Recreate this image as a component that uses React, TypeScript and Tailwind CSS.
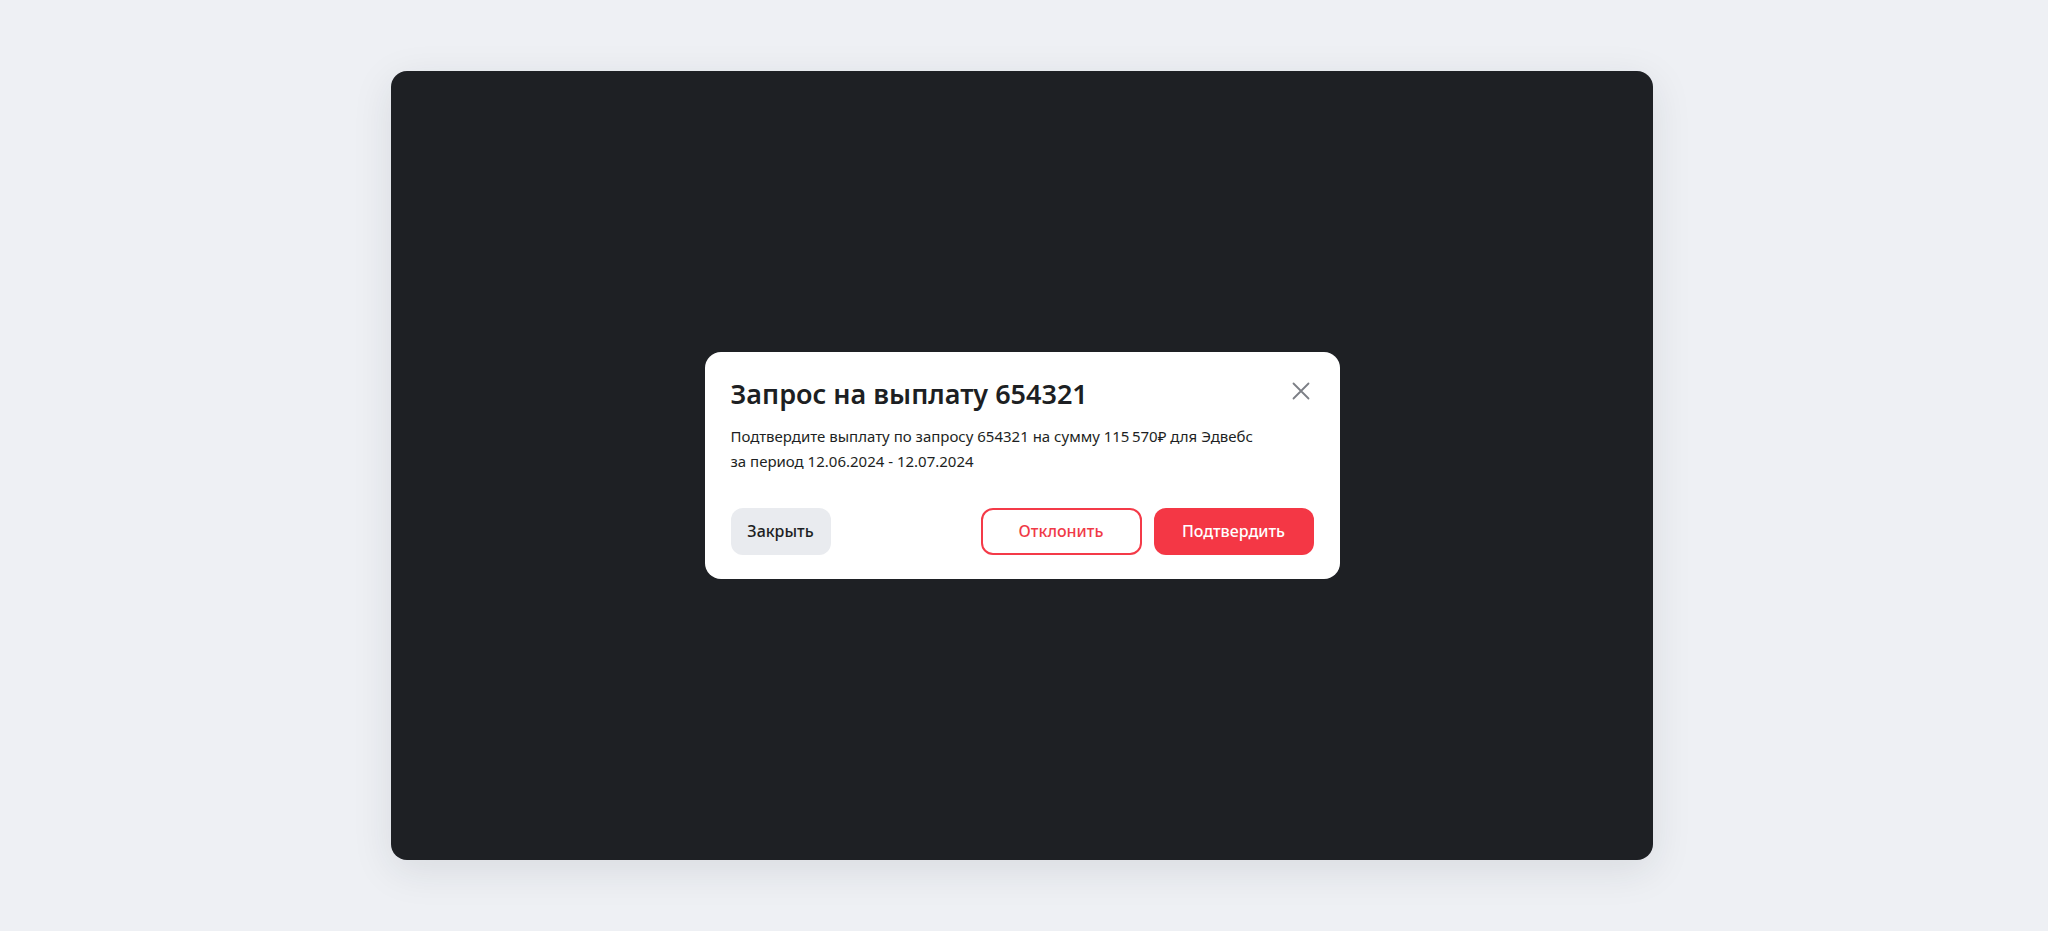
import React from "react";

export default function App() {
  return (
    <div
      className="w-full h-[931px] bg-[#eef0f4] flex items-center justify-center pr-[4px] pb-[1px]"
      style={{ fontFamily: '"Noto Sans", "Open Sans", sans-serif' }}
    >
      <div className="w-[1262px] h-[789px] rounded-2xl bg-[#1e2024] shadow-[0_10px_40px_rgba(30,35,50,0.10)] flex items-center justify-center">
        <div className="w-[635px] bg-white rounded-2xl px-[26px] pt-6 pb-6 flex flex-col">
          <div className="flex items-start justify-between">
            <h2 className="text-[27px] leading-[36px] font-semibold text-[#1d1f23]">
              Запрос на выплату 654321
            </h2>
            <button className="mt-[6px] mr-[4px] w-[18px] h-[18px] flex items-center justify-center text-[#7c7f86]">
              <svg width="18" height="18" viewBox="0 0 18 18" fill="none">
                <path d="M1.5 1.5L16.5 16.5M16.5 1.5L1.5 16.5" stroke="currentColor" strokeWidth="1.8" strokeLinecap="round" />
              </svg>
            </button>
          </div>
          <p className="mt-3 text-[15px] leading-[25px] text-[#1d1f23]">
            Подтвердите выплату по запросу 654321 на сумму 115{"\u202F"}570₽ для Эдвебс
            <br />
            за период 12.06.2024 - 12.07.2024
          </p>
          <div className="mt-[34px] flex items-center justify-between">
            <button className="h-[47px] w-[100px] rounded-xl bg-[#e9ebef] text-[16px] font-medium text-[#1d1f23]">
              Закрыть
            </button>
            <div className="flex items-center gap-3">
              <button className="h-[47px] w-[161px] rounded-xl border-2 border-[#f43a48] bg-white text-[16px] font-medium text-[#f03a47]">
                Отклонить
              </button>
              <button className="h-[47px] w-[160px] rounded-xl bg-[#f43745] text-[16px] font-medium text-white">
                Подтвердить
              </button>
            </div>
          </div>
        </div>
      </div>
    </div>
  );
}
